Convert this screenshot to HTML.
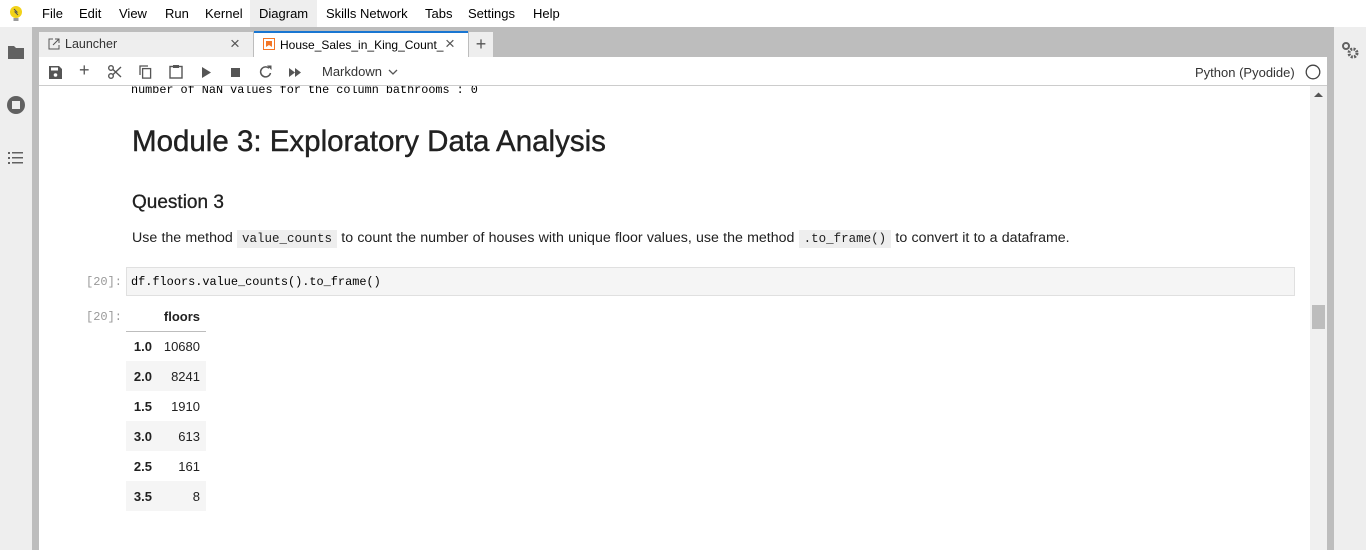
<!DOCTYPE html>
<html><head><meta charset="utf-8"><style>
*{box-sizing:border-box;margin:0;padding:0}
body{width:1366px;height:550px;overflow:hidden;background:#bdbdbd;font-family:"Liberation Sans",sans-serif;position:relative;color:#212121}
.abs{position:absolute}
#menu{left:0;top:0;width:1366px;height:27px;background:#fff;font-size:13px;color:#000}
#menu span{position:absolute;top:6px}
#lside{left:0;top:27px;width:32px;height:523px;background:#eee}
#rside{left:1334px;top:27px;width:32px;height:523px;background:#eee}
.tab{top:32px;height:25px;font-size:12.5px;color:#333}
#toolbar{left:39px;top:57px;width:1288px;height:29px;background:#fff;border-bottom:1px solid #ccc}
#content{left:39px;top:86px;width:1271px;height:464px;background:#fff;overflow:hidden}
#sb{left:1310px;top:86px;width:17px;height:464px;background:#f0f0f0}
.mono{font-family:"Liberation Mono",monospace}
code{font-family:"Liberation Mono",monospace;background:#eee;padding:2px 5px;font-size:12.5px}
.prompt{color:#999;font-size:12px;font-family:"Liberation Mono",monospace}
table{border-collapse:collapse;font-size:13px}
</style></head><body>
<div id="menu" class="abs">
<svg class="abs" style="left:8px;top:5px" width="16" height="17"><circle cx="8" cy="7" r="6" fill="#f2d218"/><rect x="5.5" y="13" width="5" height="3" fill="#999"/><path d="M6 4l3 3-2 0 3 3" stroke="#555" fill="none" stroke-width="1"/></svg>
<span style="left:42px">File</span><span style="left:79px">Edit</span><span style="left:119px">View</span><span style="left:165px">Run</span><span style="left:205px">Kernel</span>
<div class="abs" style="left:250px;top:0;width:67px;height:27px;background:#eee"></div><span style="left:259px">Diagram</span>
<span style="left:326px">Skills Network</span><span style="left:425px">Tabs</span><span style="left:468px">Settings</span><span style="left:533px">Help</span>
</div>
<div id="lside" class="abs">
<svg class="abs" style="left:7px;top:17px" width="18" height="16"><path d="M1 2h6l2 2h8v11H1z" fill="#616161"/></svg>
<svg class="abs" style="left:6px;top:68px" width="20" height="20"><circle cx="10" cy="10" r="9" fill="#616161"/><rect x="6" y="6" width="8" height="8" fill="#eee"/></svg>
<svg class="abs" style="left:8px;top:124px" width="16" height="14"><g fill="#616161"><rect x="0" y="1" width="2" height="2"/><rect x="4" y="1" width="11" height="1.5"/><rect x="0" y="6" width="2" height="2"/><rect x="4" y="6" width="11" height="1.5"/><rect x="0" y="11" width="2" height="2"/><rect x="4" y="11" width="11" height="1.5"/></g></svg>
</div>
<div id="rside" class="abs">
<svg class="abs" style="left:7px;top:14px" width="20" height="20"><circle cx="5" cy="5" r="3" fill="none" stroke="#616161" stroke-width="2"/><circle cx="12" cy="12" r="4" fill="none" stroke="#616161" stroke-width="3" stroke-dasharray="2 1.2"/></svg>
</div>
<div class="abs tab" style="left:39px;width:214px;background:#eee">
<svg class="abs" style="left:9px;top:6px" width="12" height="12"><path d="M5 1H1v10h10V7M7 1h4v4M11 1L5 7" stroke="#555" fill="none"/></svg>
<span class="abs" style="left:26px;top:5px">Launcher</span><span class="abs" style="left:191px;top:2px;font-size:17px;color:#555">×</span></div>
<div class="abs tab" style="left:254px;width:214px;height:26px;top:31px;background:#fff;border-top:2px solid #1976d2">
<svg class="abs" style="left:9px;top:5px" width="12" height="12"><rect x="0.5" y="0.5" width="11" height="11" fill="none" stroke="#f37626"/><path d="M3 3h6v6L6 7 3 9z" fill="#f37626"/></svg>
<span class="abs" style="left:26px;top:5px;color:#000;font-size:12px">House_Sales_in_King_Count_</span><span class="abs" style="left:191px;top:1px;font-size:17px;color:#555;background:#fff">×</span></div>
<div class="abs tab" style="left:469px;width:24px;background:#eee;font-size:18px;text-align:center;color:#555;line-height:24px">+</div>
<div id="toolbar" class="abs">
<svg class="abs" style="left:10px;top:9px" width="13" height="13"><path d="M0 0h10l3 3v10H0z" fill="#555"/><rect x="2" y="1.5" width="7" height="3" fill="#fff"/><circle cx="6.5" cy="9" r="1.8" fill="#fff"/></svg>
<span class="abs" style="left:40px;top:3px;font-size:18px;color:#555">+</span>
<svg class="abs" style="left:69px;top:8px" width="14" height="14"><circle cx="3" cy="11" r="2.3" fill="none" stroke="#555" stroke-width="1.4"/><circle cx="3" cy="3" r="2.3" fill="none" stroke="#555" stroke-width="1.4"/><path d="M5 4.5L13 12M5 9.5L13 2" stroke="#555" stroke-width="1.4"/></svg>
<svg class="abs" style="left:100px;top:8px" width="13" height="14"><path d="M1 10V1h8" stroke="#555" fill="none" stroke-width="1.3"/><rect x="3.6" y="3.6" width="8" height="9.5" fill="none" stroke="#555" stroke-width="1.3"/></svg>
<svg class="abs" style="left:130px;top:7px" width="14" height="15"><rect x="1" y="2.5" width="12" height="11.5" fill="none" stroke="#555" stroke-width="1.4"/><rect x="4" y="1" width="6" height="3" fill="#555"/></svg>
<svg class="abs" style="left:163px;top:10px" width="10" height="11"><path d="M0 0l9 5.5L0 11z" fill="#555"/></svg>
<div class="abs" style="left:192px;top:11px;width:9px;height:9px;background:#555"></div>
<svg class="abs" style="left:220px;top:8px" width="14" height="14"><path d="M11.5 8A5 5 0 1 1 10 3.2" stroke="#555" fill="none" stroke-width="1.5"/><path d="M8 0.5h4.5v4.5z" fill="#555"/></svg>
<svg class="abs" style="left:250px;top:11px" width="13" height="9"><path d="M0 0l6 4.5L0 9zM6 0l6 4.5L6 9z" fill="#555"/></svg>
<span class="abs" style="left:283px;top:7px;font-size:13px;color:#333">Markdown</span>
<svg class="abs" style="left:349px;top:12px" width="10" height="7"><path d="M1 1l4 4 4-4" stroke="#555" fill="none" stroke-width="1.3"/></svg>
<span class="abs" style="left:1156px;top:8px;font-size:13px;color:#333">Python (Pyodide)</span>
<svg class="abs" style="left:1266px;top:7px" width="16" height="16"><circle cx="8" cy="8" r="6.8" fill="none" stroke="#444" stroke-width="1.3"/></svg>
</div>
<div id="content" class="abs">
<div class="abs mono" style="left:92px;top:-3px;font-size:11.8px;color:#000">number of NaN values for the column bathrooms : 0</div>
<div class="abs" style="left:93px;top:39px;font-size:29.5px;color:#212121;-webkit-text-stroke:0.4px #212121">Module 3: Exploratory Data Analysis</div>
<div class="abs" style="left:93px;top:106px;font-size:19px;color:#212121;-webkit-text-stroke:0.3px #212121">Question 3</div>
<div class="abs" style="left:93px;top:144px;font-size:14.2px;color:#212121;word-spacing:0.3px">Use the method <code style="font-size:12.5px">value_counts</code> to count the number of houses with unique floor values, use the method <code>.to_frame()</code> to convert it to a dataframe.</div>
<div class="abs prompt" style="left:47px;top:189px">[20]:</div>
<div class="abs" style="left:87px;top:181px;width:1169px;height:29px;background:#f5f5f5;border:1px solid #e0e0e0"></div>
<div class="abs mono" style="left:92px;top:189px;font-size:11.9px;color:#000">df.floors.value_counts().to_frame()</div>
<div class="abs prompt" style="left:47px;top:224px">[20]:</div>
<table class="abs" style="left:87px;top:217px;width:80px">
<tr style="height:28px;border-bottom:1px solid #bdbdbd"><th></th><th style="text-align:right;padding-right:6px">floors</th></tr>
<tr style="height:30px"><th style="text-align:right;padding-right:4px;width:30px">1.0</th><td style="text-align:right;padding-right:6px">10680</td></tr>
<tr style="height:30px;background:#f5f5f5"><th style="text-align:right;padding-right:4px">2.0</th><td style="text-align:right;padding-right:6px">8241</td></tr>
<tr style="height:30px"><th style="text-align:right;padding-right:4px">1.5</th><td style="text-align:right;padding-right:6px">1910</td></tr>
<tr style="height:30px;background:#f5f5f5"><th style="text-align:right;padding-right:4px">3.0</th><td style="text-align:right;padding-right:6px">613</td></tr>
<tr style="height:30px"><th style="text-align:right;padding-right:4px">2.5</th><td style="text-align:right;padding-right:6px">161</td></tr>
<tr style="height:30px;background:#f5f5f5"><th style="text-align:right;padding-right:4px">3.5</th><td style="text-align:right;padding-right:6px">8</td></tr>
</table>
</div>
<div id="sb" class="abs">
<svg class="abs" style="left:4px;top:6px" width="9" height="6"><path d="M0 5l4.5-4.5L9 5z" fill="#555"/></svg>
<div class="abs" style="left:2px;top:219px;width:13px;height:24px;background:#bdbdbd"></div>
</div>
</body></html>
